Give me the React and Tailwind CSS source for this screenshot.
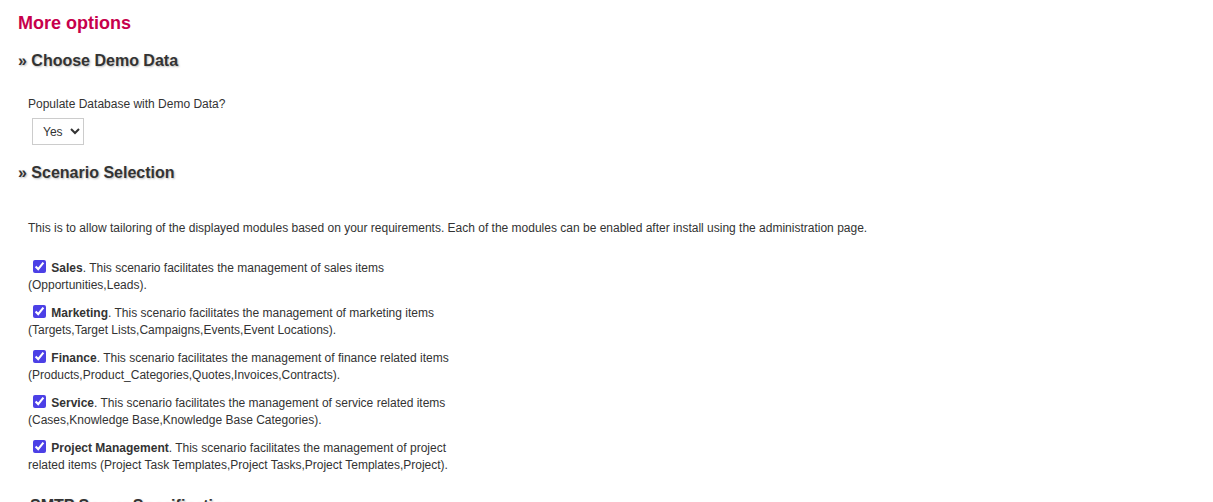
export default function App() {
  const items = [
    ["Sales", "This scenario facilitates the management of sales items (Opportunities,Leads)."],
    ["Marketing", "This scenario facilitates the management of marketing items (Targets,Target Lists,Campaigns,Events,Event Locations)."],
    ["Finance", "This scenario facilitates the management of finance related items (Products,Product_Categories,Quotes,Invoices,Contracts)."],
    ["Service", "This scenario facilitates the management of service related items (Cases,Knowledge Base,Knowledge Base Categories)."],
    ["Project Management", "This scenario facilitates the management of project related items (Project Task Templates,Project Tasks,Project Templates,Project)."],
  ];
  return (
    <div className="font-['Liberation_Sans',Arial,sans-serif] text-[12px] text-[#333] bg-white h-[502px] overflow-hidden">
      <h1 className="ml-[18px] pt-[13px] text-[18px] leading-[20px] font-bold text-[#c7004c]">More options</h1>
      <h2 className="ml-[18px] mt-[19px] text-[16px] leading-[18px] font-bold text-[#333] [text-shadow:1px_1px_2px_#bbb]">» Choose Demo Data</h2>
      <div className="ml-[28px] mt-[27px] leading-[14px]">Populate Database with Demo Data?</div>
      <div className="ml-[32px] mt-[7px]">
        <select defaultValue="Yes" className="h-[27px] w-[52px] border border-[#ccc] bg-white text-[12px] text-[#333] pl-[6px]">
          <option>Yes</option>
          <option>No</option>
        </select>
      </div>
      <h2 className="ml-[18px] mt-[19px] text-[16px] leading-[18px] font-bold text-[#333] [text-shadow:1px_1px_2px_#bbb]">» Scenario Selection</h2>
      <div className="ml-[28px] mt-[39px] leading-[14px]">
        This is to allow tailoring of the displayed modules based on your requirements. Each of the modules can be enabled after install using the administration page.
      </div>
      <div className="ml-[28px] mt-[25px] w-[425px] flex flex-col gap-[11px]">
        {items.map(([name, desc]) => (
          <div key={name} className="leading-[17px]">
            <input type="checkbox" defaultChecked className="w-[13px] h-[13px] ml-[5px] mr-[2px] align-[-1px] accent-[#4c40e6]" />{" "}
            <b>{name}</b>. {desc}
          </div>
        ))}
      </div>
      <h2 className="ml-[30px] mt-[23px] text-[16px] leading-[18px] font-bold text-[#333] [text-shadow:1px_1px_2px_#bbb]">SMTP Server Specification</h2>
    </div>
  );
}
